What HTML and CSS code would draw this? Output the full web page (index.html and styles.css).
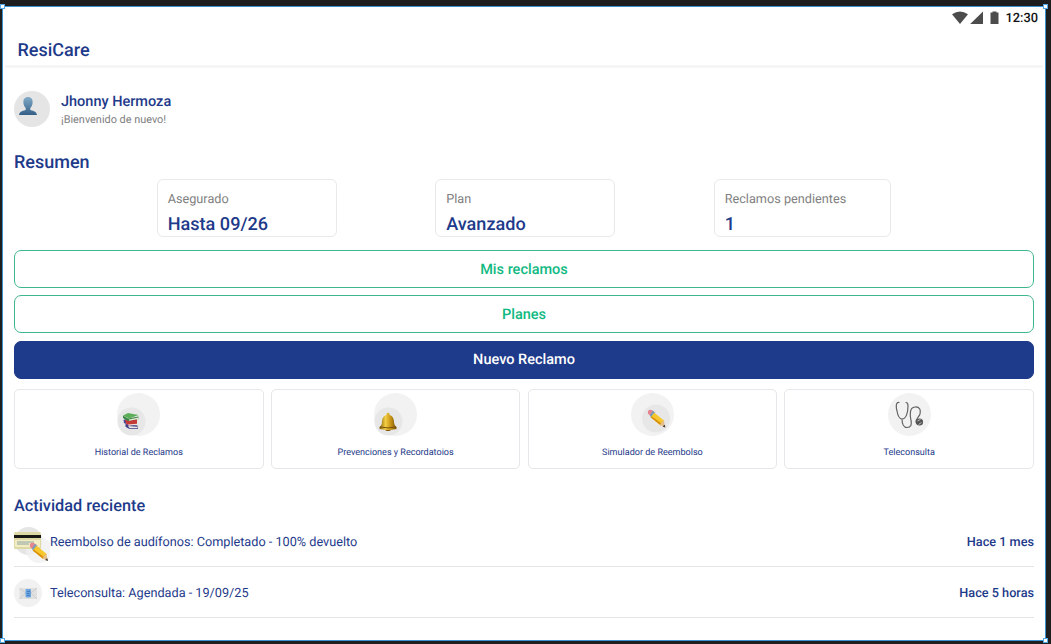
FILE: index.html
```html
<!DOCTYPE html>
<html lang="es">
<head>
<meta charset="utf-8">
<title>ResiCare</title>
<link rel="stylesheet" href="styles.css">
</head>
<body>
<div class="frame">
  <i class="handle tl"></i><i class="handle tr"></i><i class="handle bl"></i><i class="handle br"></i>
  <div class="status">
    <svg class="status-icons" width="48" height="14" viewBox="0 0 48 14" fill="#4c4c4c">
      <path d="M0 3.200Q8 -2 16 3.200L8 13Z"/><path d="M31 .5V13H18.200Z"/><path d="M38.500 1.500h2V.4h4v1.100h2V13h-8Z"/>
    </svg>
    <span class="clock">12:30</span>
  </div>
  <header class="header"><h1 class="brand">ResiCare</h1></header>
  <main class="content">
    <section class="user">
      <div class="avatar">
        <svg width="18" height="18" viewBox="0 0 18 18">
          <defs><linearGradient id="person" x2="0" y2="1"><stop stop-color="#83abc8"/><stop offset="1" stop-color="#345f86"/></linearGradient></defs>
          <path fill="url(#person)" d="M9 0C5.800 0 4.200 2.300 4.400 5.500 4.500 8 5.500 9.800 6.700 11v1.700C5.200 14 .5 13.700 0 18h18c-.5-4.300-5.200-4-6.700-5.300V11c1.200-1.200 2.200-3 2.300-5.500C13.800 2.300 12.200 0 9 0Z"/>
        </svg>
      </div>
      <div class="user-text"><div class="name">Jhonny Hermoza</div><div class="welcome">¡Bienvenido de nuevo!</div></div>
    </section>
    <h2 class="title summary-title">Resumen</h2>
    <section class="stats">
      <div class="stat"><span class="label">Asegurado</span><strong class="value">Hasta 09/26</strong></div>
      <div class="stat"><span class="label">Plan</span><strong class="value">Avanzado</strong></div>
      <div class="stat"><span class="label">Reclamos pendientes</span><strong class="value">1</strong></div>
    </section>
    <div class="buttons">
      <button class="button">Mis reclamos</button>
      <button class="button">Planes</button>
      <button class="button primary">Nuevo Reclamo</button>
    </div>
    <section class="tiles">
      <div class="tile">
        <svg class="tile-icon" viewBox="0 0 43 43">
          <circle cx="21.500" cy="21.500" r="21.500" fill="#f2f2f2"/><circle cx="14.500" cy="28.500" r="14" fill="#e7e7e7"/>
          <path fill="#403b87" d="m8.500 31 12 1.500.5 3.500-9-.3-3.500-2Z"/><path fill="#e9e5e2" d="m11 33 9.500.8v1.500l-8-.2Z"/>
          <path fill="#45459a" d="m6.500 27 2-1 2 3-1.500 2-2-1Z"/>
          <path fill="#c53b38" d="m8 27 12-2v6l-8 1.500-3-2Z"/><path fill="#f0e3dd" d="m11 31.500 9-.8.500 1-9 1Z"/>
          <path fill="#3b8744" d="m6 22.500 5 3 10.500-2V26L11 28l-5-3Z"/><path fill="#e9ebd8" d="m12 26.500 9.500-2V26L12 27.700Z"/><path fill="#5cae58" d="m6 22.500 5-2.500 10.500 2-9.500 3.500Z"/>
        </svg>
        <span class="tile-label">Historial de Reclamos</span>
      </div>
      <div class="tile">
        <svg class="tile-icon" viewBox="0 0 43 43">
          <defs><linearGradient id="gold"><stop stop-color="#886011"/><stop offset=".35" stop-color="#f3cf44"/><stop offset=".65" stop-color="#c99517"/><stop offset="1" stop-color="#775007"/></linearGradient></defs>
          <circle cx="21.500" cy="21.500" r="21.500" fill="#f2f2f2"/><circle cx="14.500" cy="28.500" r="14" fill="#e7e7e7"/>
          <ellipse cx="14" cy="36" rx="3" ry="2" fill="#81570b"/>
          <path fill="url(#gold)" d="M12.500 22v-1.500q1.500-1.500 3 0V22c4 1 4.500 5 4.700 8.500q.3 2 2.300 3.500v2q-8.500 2-17 0v-2q2-1.500 2.300-3.500C8 27 8.500 23 12.500 22Z"/>
          <path d="M6 34q8 1.800 16 0" stroke="#79510b" fill="none"/>
        </svg>
        <span class="tile-label">Prevenciones y Recordatoios</span>
      </div>
      <div class="tile">
        <svg class="tile-icon" viewBox="0 0 43 43">
          <circle cx="21.500" cy="21.500" r="21.500" fill="#f2f2f2"/><circle cx="25" cy="25.500" r="14" fill="#e7e7e7"/>
          <g transform="translate(16 16) scale(.92)"><path fill="#e7848d" d="M1 3Q1 0 5 1l3 2-4 5-3-3Z"/><path fill="#7c9db8" d="m6 2 3 2-4 6-2-3Z"/><path fill="#f7c82d" d="m8 4 11 9-4 5L4 9Z"/><path fill="#d98d0c" d="m5 8 11 8-1 2L4 9Z"/><path fill="#e5bd88" d="m18 12 2 8-6-3Z"/><path fill="#37332f" d="m19.200 17 .8 3-3-1Z"/></g>
        </svg>
        <span class="tile-label">Simulador de Reembolso</span>
      </div>
      <div class="tile">
        <svg class="tile-icon" viewBox="0 0 43 43">
          <circle cx="21.500" cy="21.500" r="21.500" fill="#f2f2f2"/>
          <g fill="none" stroke="#626262" stroke-width="1.200" stroke-linecap="round"><path d="M11 9.500C7.500 9 8 14 9 18c.7 4 1.500 8 5 8 4 0 6-6 6-13 0-2.500-.5-3.500-2-3.500M14 26c0 5 2 8.500 5 8.500 4 0 5-3 4-7-1-5-2-13 4-13.500 5-.4 6 3.500 5 7-1 3-4.500 5-4 8 .3 1.800 1.600 1.500 2 1"/></g>
          <circle cx="31.500" cy="29" r="3.600" fill="#555"/><path d="m29.500 28 3-1.500m-2 5 3-2" stroke="#bbb"/>
        </svg>
        <span class="tile-label">Teleconsulta</span>
      </div>
    </section>
    <h2 class="title activity-title">Actividad reciente</h2>
    <section class="activity">
      <div class="row">
        <svg class="row-icon" width="36" height="36" viewBox="0 0 36 36">
          <circle cx="14.500" cy="14" r="14" fill="#e5e5e5"/><circle cx="25" cy="23" r="13" fill="#f0f0f0" opacity=".8"/>
          <rect x="0" y="5" width="27" height="17" rx="1.500" fill="#ded8a5"/><path fill="#f3edc4" d="M1 13h25v7H1z"/><path fill="#171713" d="M0 8h27v3H0z"/><path d="M3 15h17M3 17h12" stroke="#8da4a4"/>
          <g transform="translate(15 15) scale(.95)"><path fill="#e7848d" d="M1 3Q1 0 5 1l3 2-4 5-3-3Z"/><path fill="#7c9db8" d="m6 2 3 2-4 6-2-3Z"/><path fill="#f7c82d" d="m8 4 11 9-4 5L4 9Z"/><path fill="#d98d0c" d="m5 8 11 8-1 2L4 9Z"/><path fill="#e5bd88" d="m18 12 2 8-6-3Z"/><path fill="#37332f" d="m19.200 17 .8 3-3-1Z"/></g>
        </svg>
        <span class="event">Reembolso de audífonos: Completado - 100% devuelto</span><strong class="when">Hace 1 mes</strong>
      </div>
      <div class="row">
        <svg class="row-icon" width="36" height="28" viewBox="0 0 36 28">
          <circle cx="14" cy="14" r="14" fill="#f1f1f1"/><path fill="#e0e0df" d="M5.500 9h17.500v11H5.500Z"/><path d="m5.500 9 8.700 7L23 9M5.500 20l6-6m11.500 6-6-6" fill="none" stroke="#c3c5c8" stroke-width=".7"/>
          <rect x="11.500" y="10" width="5.500" height="8.500" rx="1" fill="#6ba4e0"/><path d="M13 12.500h3m-3 2h2.500m-2.500 2h3" stroke="#3476ba" stroke-width=".8"/>
        </svg>
        <span class="event">Teleconsulta: Agendada - 19/09/25</span><strong class="when">Hace 5 horas</strong>
      </div>
    </section>
  </main>
</div>
</body>
</html>
```
FILE: styles.css
```css
* { box-sizing: border-box; }
body { margin: 0; height: 644px; padding: 6px 5px 3px 2px; overflow: hidden; background: #1e1e1e; font-family: Roboto, sans-serif; color: #1e3a8a; text-rendering: geometricPrecision; }
h1, h2 { margin: 0; font-weight: 500; }
.frame { position: relative; height: 635px; background: #fff; border: 1px solid #3c92d1; }
.handle { position: absolute; width: 5px; height: 5px; background: #fff; border: 1px solid #55a9e4; }
.tl { left: -3px; top: -3px; }
.tr { right: -3px; top: -3px; }
.bl { left: -3px; bottom: -3px; }
.br { right: -3px; bottom: -3px; }
.status { height: 22px; display: flex; align-items: center; justify-content: flex-end; gap: 6px; padding-right: 7px; color: #111; }
.status-icons { display: block; }
.clock { padding-top: 2px; font-size: 12.800px; line-height: 16px; font-weight: 500; }
.header { height: 39px; margin: 0 2px; padding: 10px 12.500px 0; border-bottom: 3px solid #f6f6f6; }
.brand { font-size: 18px; line-height: 24px; }
.content { padding: 23px 11px 0; }
.user { display: flex; align-items: center; height: 36px; gap: 11px; }
.avatar { width: 36px; height: 36px; padding: 6px 5px; border-radius: 50%; background: #e5e5e5; }
.avatar svg { display: block; }
.user-text { padding-top: 1px; }
.name { font-size: 14.500px; line-height: 21px; font-weight: 500; }
.welcome { font-size: 10.900px; line-height: 16px; color: #808080; }
.title { height: 24px; line-height: 26px; }
.summary-title { margin-top: 23px; font-size: 18px; }
.stats { display: grid; grid-template-columns: 180px 180px 177px; gap: 98.500px; margin-top: 5px; padding-left: 142.700px; }
.stat { height: 58px; padding: 11px 10px 0; border: 1px solid #e9e9e9; border-radius: 6px; display: flex; flex-direction: column; }
.label { font-size: 12.700px; line-height: 18px; color: #808080; }
.value { font-size: 18.100px; line-height: 24px; margin-top: 4px; font-weight: 500; }
.buttons { display: flex; flex-direction: column; gap: 7.250px; margin-top: 13px; }
.button { height: 38px; padding: 1px 0 0; background: #fff; border: 1px solid #3eb78d; border-radius: 7px; color: #10b981; font: 500 14.500px/20px Roboto, sans-serif; text-rendering: inherit; }
.primary { color: #fff; background: #1e3a8a; border-color: #1e3a8a; }
.tiles { display: grid; grid-template-columns: repeat(4, 1fr); gap: 7.300px; margin-top: 10.900px; }
.tile { height: 79.500px; padding-top: 3px; border: 1px solid #e7e7eb; border-radius: 5px; display: flex; flex-direction: column; align-items: center; }
.tile-icon { width: 43px; height: 43px; }
.tile-label { margin-top: 11px; font-size: 9.060px; line-height: 12px; }
.activity-title { margin-top: 24.200px; font-size: 16.300px; }
.row { height: 51px; display: flex; align-items: center; border-bottom: 1px solid #e5e5e5; font-size: 12.700px; line-height: 18px; }
.row:first-child { height: 50px; }
.row-icon { width: 36px; flex: none; margin-top: 2px; }
.row:first-child .row-icon { margin-top: 7px; }
.event, .when { padding-top: 3px; }
.event { flex: 1; }
.when { font-weight: 500; }
```
